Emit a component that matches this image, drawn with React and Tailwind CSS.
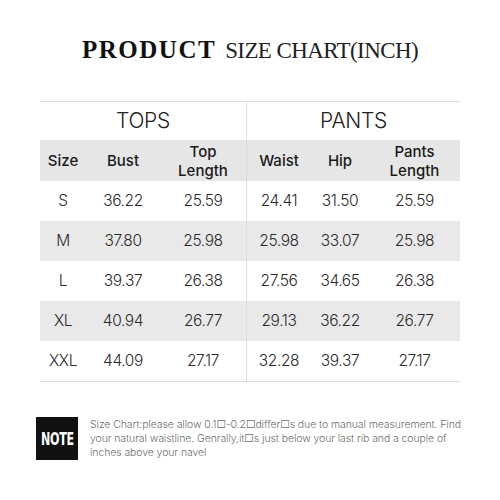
import React from "react";

const tops = [
  ["S", "36.22", "25.59"],
  ["M", "37.80", "25.98"],
  ["L", "39.37", "26.38"],
  ["XL", "40.94", "26.77"],
  ["XXL", "44.09", "27.17"],
];
const pants = [
  ["24.41", "31.50", "25.59"],
  ["25.98", "33.07", "25.98"],
  ["27.56", "34.65", "26.38"],
  ["29.13", "36.22", "26.77"],
  ["32.28", "39.37", "27.17"],
];

const body = { fontFamily: "Inter, 'Noto Sans', sans-serif" };

function Half({ title, heads, rows, widths, border }) {
  return (
    <div className={"flex flex-col " + (border ? "border-l border-[#dcdcdc]" : "")}>
      <div className="h-[38px] flex items-center justify-center text-[21px] font-light text-[#222] tracking-[-0.3px]" style={body}>
        {title}
      </div>
      <div className="h-[41px] flex bg-[#e6e6e6]">
        {heads.map((h, i) => (
          <div
            key={i}
            className={"flex items-center justify-center text-center text-[15px] leading-[19px] font-medium text-[#1a1a1a] " + widths[i]}
            style={body}
          >
            {h}
          </div>
        ))}
      </div>
      {rows.map((r, ri) => (
        <div key={ri} className={"h-[40px] flex " + (ri % 2 === 1 ? "bg-[#e9e9e9]" : "bg-white")}>
          {r.map((c, ci) => (
            <div
              key={ci}
              className={"flex items-center justify-center text-[15.5px] font-light text-[#2a2a2a] tracking-[-0.4px] " + widths[ci]}
              style={body}
            >
              {c}
            </div>
          ))}
        </div>
      ))}
    </div>
  );
}

export default function App() {
  return (
    <div className="w-[500px] h-[500px] bg-white relative overflow-hidden">
      <div className="pt-[36px] h-[101px] flex justify-center items-start">
        <div className="flex items-baseline text-[#111]" style={{ fontFamily: "'Liberation Serif', 'DejaVu Serif', serif" }}>
          <span className="text-[25px] font-bold tracking-[1.5px] leading-[28px]">PRODUCT</span>
          <span className="ml-[9px] text-[23px] font-normal tracking-[-0.6px] leading-[28px] text-[#222]">SIZE CHART(INCH)</span>
        </div>
      </div>
      <div className="mx-[40px] w-[420px] flex border-t border-b border-[#dcdcdc]">
        <div className="w-[206px]">
          <Half
            title="TOPS"
            heads={["Size", "Bust", <span key="t">Top<br />Length</span>]}
            rows={tops}
            widths={["w-[46px]", "w-[74px]", "w-[86px]"]}
          />
        </div>
        <div className="w-[214px]">
          <Half
            title="PANTS"
            heads={["Waist", "Hip", <span key="p">Pants<br />Length</span>]}
            rows={pants}
            widths={["w-[64px]", "w-[58px]", "w-[91px]"]}
            border
          />
        </div>
      </div>
      <div className="mt-[35px] ml-[36px] mr-[36px] flex items-start gap-[12px]">
        <div className="w-[42px] h-[43px] shrink-0 bg-[#111] flex items-center justify-center overflow-hidden">
          <span
            className="inline-block text-white text-[18px] font-bold scale-x-[0.62] tracking-[-0.5px]"
            style={{ fontFamily: "'DejaVu Sans', sans-serif" }}
          >
            NOTE
          </span>
        </div>
        <p className="mt-[1px] text-[10.5px] leading-[14px] text-[#707070] font-light tracking-[-0.1px]" style={body}>
          Size Chart:please allow 0.1□-0.2□differ□s due to manual measurement. Find your natural waistline. Genrally,it□s just below your last rib and a couple of inches above your navel
        </p>
      </div>
    </div>
  );
}
